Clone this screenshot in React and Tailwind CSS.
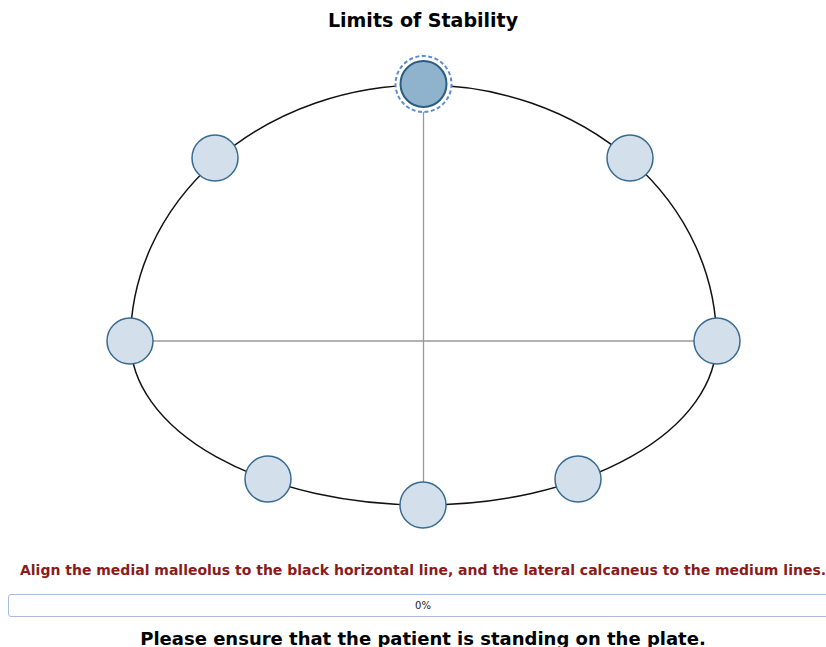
export default function App() {
  const small = [
    [215, 158],
    [630, 158],
    [130, 341],
    [717, 341],
    [268, 479],
    [578, 479],
    [423, 505],
  ];
  return (
    <div className="w-[826px] h-[647px] overflow-hidden bg-white">
      <div className="w-[846px] flex flex-col items-center" style={{ fontFamily: '"DejaVu Sans", Verdana, sans-serif' }}>
        <h1 className="mt-[8px] h-[24px] text-[19px] leading-[24px] font-bold text-black">Limits of Stability</h1>
        <svg width="846" height="520" viewBox="0 32 846 520" className="block">
          <path
            d="M130.5 341 A293 256 0 0 1 716.5 341 A293 164 0 0 1 130.5 341 Z"
            fill="none"
            stroke="#111"
            strokeWidth="1.5"
          />
          <line x1="130" y1="341" x2="717" y2="341" stroke="#999" strokeWidth="1.3" />
          <line x1="423.5" y1="85" x2="423.5" y2="505" stroke="#999" strokeWidth="1.3" />
          {small.map(([x, y], i) => (
            <circle key={i} cx={x} cy={y} r="23" fill="#d3e0eb" stroke="#386b91" strokeWidth="1.5" />
          ))}
          <circle cx="423.5" cy="84" r="28" fill="#fff" stroke="#5b8fd2" strokeWidth="2" strokeDasharray="4 2.5" />
          <circle cx="423.5" cy="84" r="23" fill="#8fb3cc" stroke="#2a5d80" strokeWidth="2" />
        </svg>
        <p className="mt-[9px] text-[14px] leading-[18px] font-bold text-[#8b1a1a]">
          Align the medial malleolus to the black horizontal line, and the lateral calcaneus to the medium lines.
        </p>
        <div className="mt-[15px] w-[830px] h-[23px] border border-[#a6bde0] rounded-[3px] flex items-center justify-center">
          <span className="text-[10px] text-[#222]">0%</span>
        </div>
        <p className="mt-[10px] text-[18px] leading-[24px] font-bold text-black">
          Please ensure that the patient is standing on the plate.
        </p>
      </div>
    </div>
  );
}
